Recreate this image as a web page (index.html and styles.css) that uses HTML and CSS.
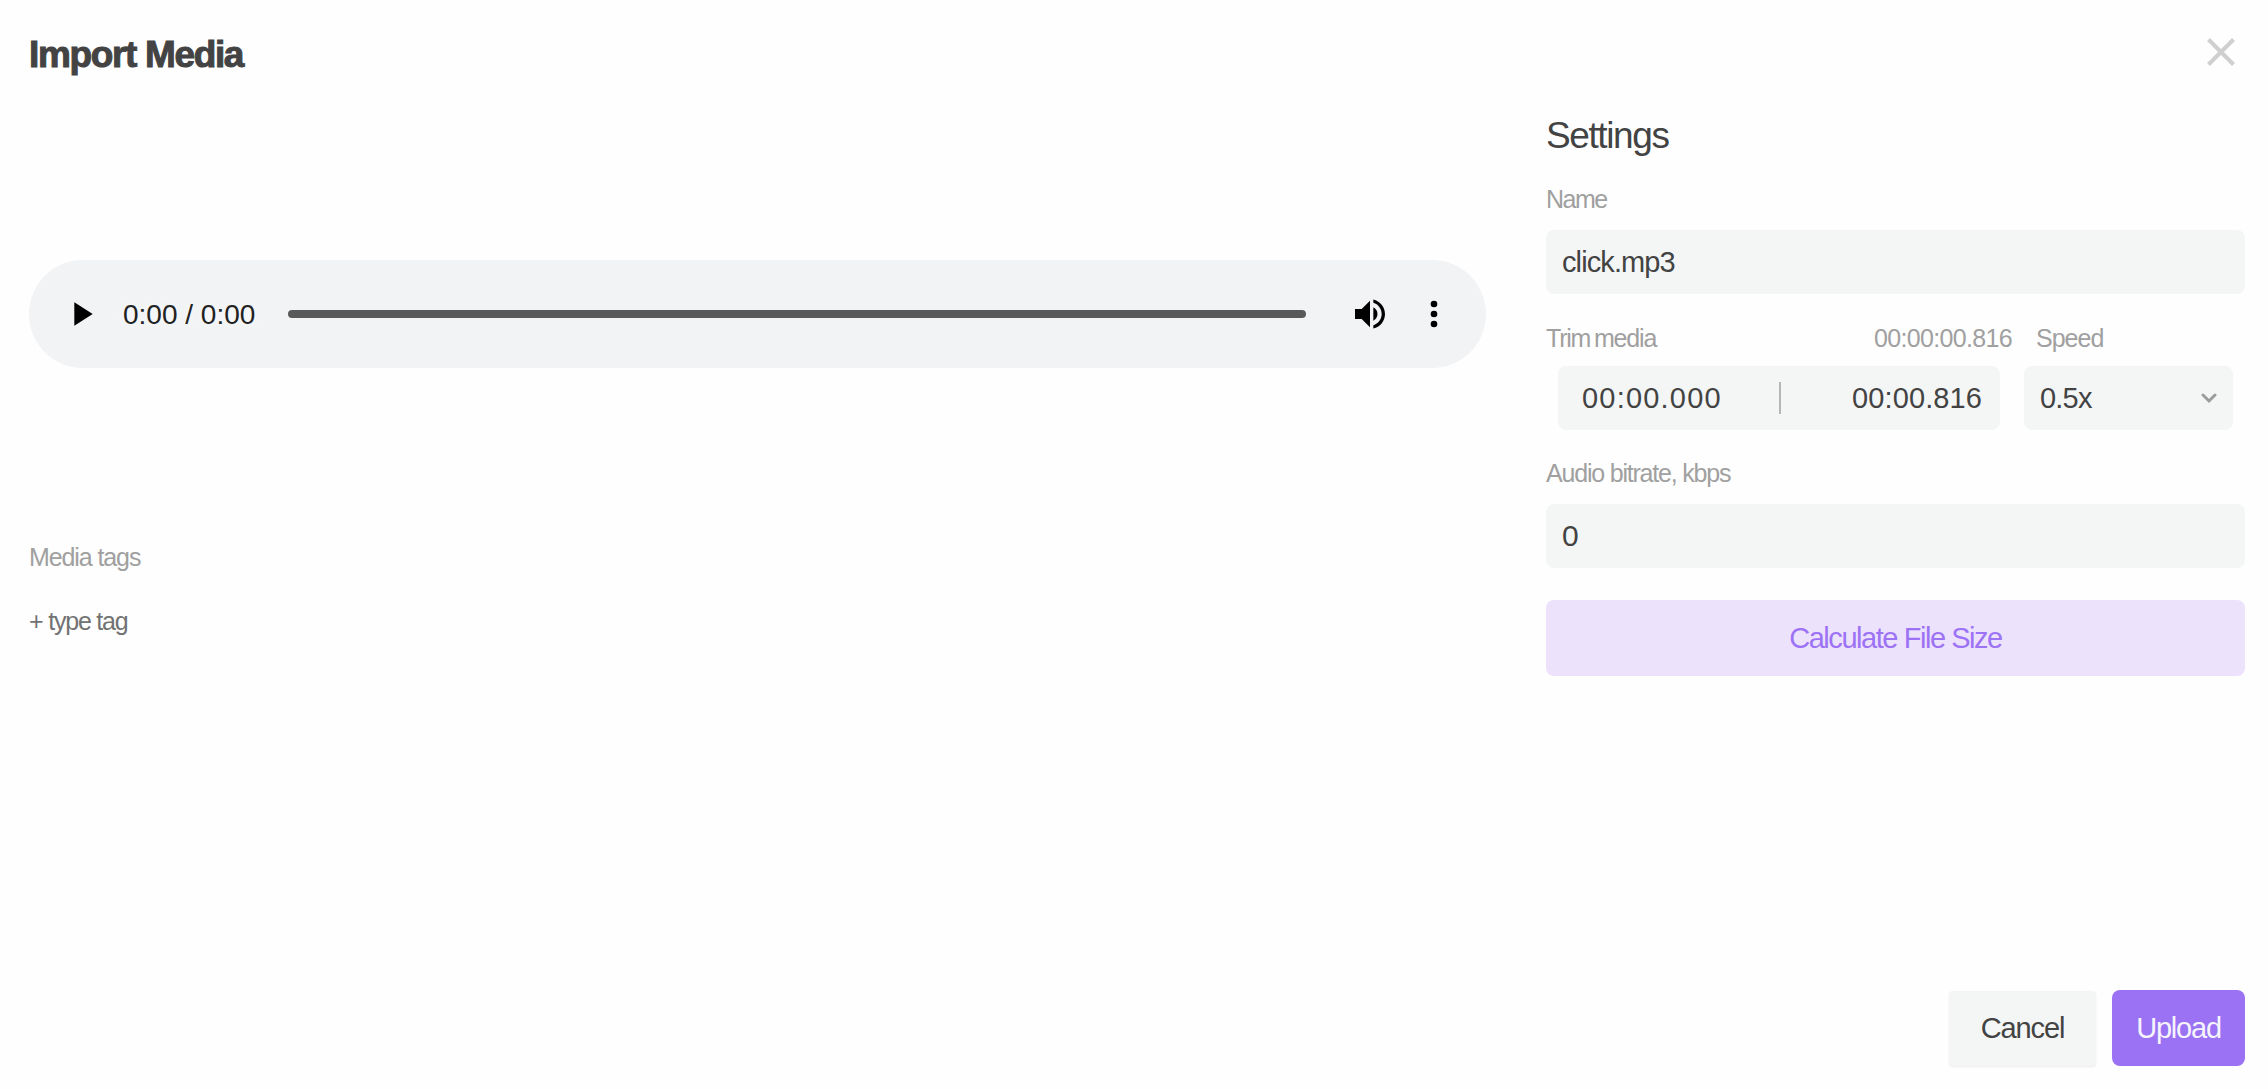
FILE: index.html
```html
<!DOCTYPE html>
<html lang="en">
<head>
<meta charset="utf-8">
<title>Import Media</title>
<link rel="stylesheet" href="styles.css">
</head>
<body>
<div class="dialog">
  <header class="header">
    <h1 class="title">Import Media</h1>
    <button class="close" aria-label="Close">
      <svg width="28" height="28" viewBox="0 0 28 28"><path d="M1.5 1.5L26.5 26.5M26.5 1.5L1.5 26.5"/></svg>
    </button>
  </header>
  <main class="content">
    <section class="media">
      <div class="player">
        <svg class="play" width="40" height="40" viewBox="0 0 24 24"><path d="M8 5v14l11-7z"/></svg>
        <span class="time">0:00 / 0:00</span>
        <div class="track"></div>
        <svg class="volume" width="40" height="40" viewBox="0 0 24 24"><path d="M3 9v6h4l5 5V4L7 9H3zm13.5 3c0-1.77-1.02-3.29-2.5-4.03v8.05c1.48-.73 2.5-2.25 2.5-4.02zM14 3.23v2.06c2.89.86 5 3.54 5 6.71s-2.11 5.85-5 6.71v2.06c4.01-.91 7-4.49 7-8.77s-2.99-7.86-7-8.77z"/></svg>
        <svg class="more" width="40" height="40" viewBox="0 0 24 24"><circle cx="12" cy="6" r="2"/><circle cx="12" cy="12" r="2"/><circle cx="12" cy="18" r="2"/></svg>
      </div>
      <div class="label tags-label">Media tags</div>
      <div class="label add-tag">+ type tag</div>
    </section>
    <section class="settings">
      <h2 class="settings-title">Settings</h2>
      <div class="label name-label">Name</div>
      <div class="field"><span class="file-name">click.mp3</span></div>
      <div class="trim-grid">
        <div class="trim-head">
          <span class="label trim-label">Trim media</span>
          <span class="label duration">00:00:00.816</span>
        </div>
        <span class="label speed-label">Speed</span>
        <div class="field trim">
          <span class="start">00:00.000</span>
          <span class="divider"></span>
          <span class="end">00:00.816</span>
        </div>
        <div class="field speed">
          <span>0.5x</span>
          <svg width="16" height="11" viewBox="0 0 16 11"><path d="M2 2L8 8L14 2"/></svg>
        </div>
      </div>
      <div class="label bitrate-label">Audio bitrate, kbps</div>
      <div class="field bitrate">0</div>
      <button class="button calculate">Calculate File Size</button>
    </section>
  </main>
  <footer class="footer">
    <button class="button cancel">Cancel</button>
    <button class="button upload">Upload</button>
  </footer>
</div>
</body>
</html>
```
FILE: styles.css
```css
* { box-sizing: border-box; }
body {
  margin: 0;
  background: #fefefe;
  color: #434343;
  font-family: "Liberation Sans", Arial, sans-serif;
  font-size: 29px;
}
button { border: 0; padding: 0; font: inherit; background: none; }
svg { display: block; flex: none; }
.dialog {
  display: flex;
  flex-direction: column;
  height: 1089px;
  padding: 0 23px 23px 29px;
}
.header {
  display: flex;
  justify-content: space-between;
  align-items: center;
  height: 108px;
}
.title {
  margin: 2px 0 0;
  font-size: 37px;
  line-height: 44px;
  letter-spacing: -1.35px;
  -webkit-text-stroke: 1px #434343;
}
.close { margin: 0 10px 4px 0; }
.close path { stroke: #cfcfcf; stroke-width: 4; }

.content {
  display: grid;
  grid-template-columns: 1457px 699px;
  column-gap: 60px;
}
.label {
  display: block;
  font-size: 25px;
  line-height: 40px;
  color: #a0a0a0;
  white-space: nowrap;
}

.player {
  display: flex;
  align-items: center;
  height: 108px;
  margin-top: 152px;
  padding: 0 32px;
  border-radius: 54px;
  background: #f1f3f5;
}
.time {
  width: 133px;
  margin: 1px 0 0 22px;
  font-size: 28px;
  color: #222;
  white-space: nowrap;
  text-shadow: 0 0 10px #fff;
}
.track {
  flex: 1;
  height: 8px;
  margin: 0 44px 0 32px;
  border-radius: 4px;
  background: #595959;
}
.more { margin-left: 24px; }
.tags-label { margin-top: 169px; letter-spacing: -1.1px; }
.add-tag { margin-top: 24px; color: #727272; letter-spacing: -1.2px; }

.settings { padding-top: 7px; }
.settings-title {
  margin: 1px 0 -1px;
  font-size: 37px;
  font-weight: 400;
  line-height: 40px;
  letter-spacing: -1.4px;
}
.name-label { margin: 24px 0 11px; letter-spacing: -1.5px; }
.field {
  display: flex;
  align-items: center;
  height: 64px;
  padding: 0 16px;
  border-radius: 8px;
  background: #f4f6f6;
}
.file-name { letter-spacing: -0.9px; }
.bitrate { font-size: 30px; }
.trim-grid {
  display: grid;
  grid-template-columns: 466px 233px;
  row-gap: 8px;
  margin-top: 24px;
}
.trim-head { display: flex; justify-content: space-between; }
.trim-label { letter-spacing: -1.2px; word-spacing: -2px; }
.duration { letter-spacing: -0.67px; }
.speed-label { padding-left: 24px; letter-spacing: -1px; }
.trim { margin: 0 12px; padding: 0 17px 0 24px; }
.speed { justify-content: space-between; margin: 0 12px; letter-spacing: -0.8px; }
.speed path { fill: none; stroke: #9c9c9c; stroke-width: 3; stroke-linecap: round; }
.start { letter-spacing: 1.2px; }
.end { margin-right: 1px; letter-spacing: 0.1px; }
.divider { width: 2px; height: 32px; margin: 0 auto 0 57px; background: #b6b6b6; }
.bitrate-label { margin: 23px 0 11px; letter-spacing: -1.2px; }

.button {
  height: 76px;
  border-radius: 8px;
  text-align: center;
}
.calculate {
  width: 100%;
  margin-top: 32px;
  background: #ede2fb;
  color: #9d73f5;
  letter-spacing: -1.45px;
}
.footer {
  display: flex;
  justify-content: flex-end;
  gap: 16px;
  margin-top: auto;
}
.cancel {
  width: 147px;
  height: 75px;
  margin-top: 1px;
  border-radius: 4px;
  background: #f4f6f6;
  box-shadow: 0 1px 2px rgba(0, 0, 0, 0.08);
  color: #434343;
  letter-spacing: -1.1px;
}
.upload {
  width: 133px;
  background: #9b72f4;
  color: #f6f4fc;
  letter-spacing: -1.2px;
}
```
